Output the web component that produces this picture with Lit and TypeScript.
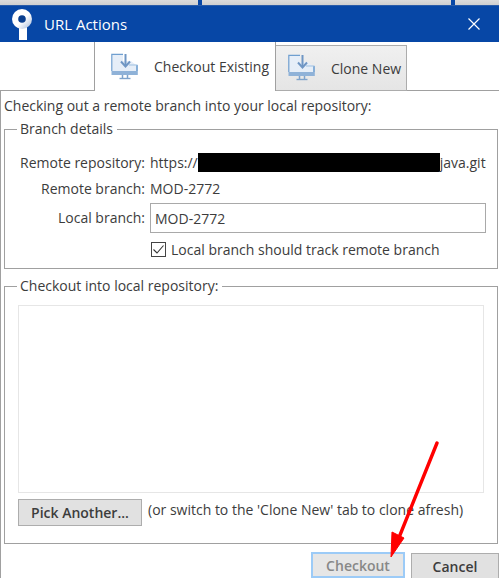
import { LitElement, html, css, svg } from "lit";
import { customElement } from "lit/decorators.js";

const monitor = svg`<svg class="tab-icon" width="30" height="28" viewBox="0 0 30 28" aria-hidden="true">
  <path d="M1 18 V1.5 H12" fill="none" stroke="#6f9fd0" stroke-width="1.6"/>
  <path d="M1.5 2 H12 V8 L20 8 L25 12 H26.5 V18 H1.5 Z" fill="#e6eef8"/>
  <path d="M26 12 V18" stroke="#6f9fd0" stroke-width="1.6" fill="none"/>
  <path d="M18 12 H26.5" stroke="#9dbfe0" stroke-width="1" fill="none"/>
  <path d="M0.5 18 H26.8 V22 H0.5 Z" fill="#8fb2d8"/>
  <path d="M14.5 1 V12" stroke="#6f96c4" stroke-width="2" fill="none"/>
  <path d="M10 8.5 L14.5 13.5 L19 8.5" stroke="#6f96c4" stroke-width="2" fill="none"/>
  <path d="M11.5 22 V25 M16.5 22 V25" stroke="#7ea3cc" stroke-width="1.5" fill="none"/>
  <path d="M8.5 25.5 H19.5" stroke="#7ea3cc" stroke-width="1.4" fill="none"/>
</svg>`;

@customElement("app-root")
export class AppRoot extends LitElement {
  static styles = css`
    :host {
      display: block;
      position: relative;
      width: 499px;
      height: 578px;
      overflow: hidden;
      background: #fff;
      font-family: "Open Sans", "Noto Sans", sans-serif;
      font-size: 14px;
      color: #3c3c3c;
    }
    .backdrop {
      height: 5px;
      display: flex;
      background: linear-gradient(#dcdcdc, #cfcfcf);
    }
    .sliver {
      width: 4px;
      height: 5px;
      background: #0747a6;
    }
    .sliver.a { margin-left: 198px; }
    .sliver.b { margin-left: 249px; }
    .titlebar {
      height: 37px;
      background: #0747a6;
      border-top: 1px solid #2a5ca8;
      box-sizing: border-box;
      display: flex;
      align-items: center;
      color: #fff;
      padding: 0 19px 0 10px;
    }
    .logo { flex: none; }
    .title {
      margin-left: 10px;
      font-size: 15px;
      flex: 1;
    }
    .tabs {
      height: 49px;
      display: flex;
      align-items: flex-end;
      border-bottom: 1px solid #a0a0a0;
      box-sizing: border-box;
      padding-left: 94px;
    }
    .tab {
      box-sizing: border-box;
      display: flex;
      align-items: center;
    }
    .tab.active {
      width: 182px;
      height: 49px;
      margin-bottom: -1px;
      background: #fff;
      border-left: 1px solid #a0a0a0;
      border-right: 1px solid #a0a0a0;
      padding-left: 16px;
      gap: 13px;
    }
    .tab.inactive {
      width: 131px;
      height: 46px;
      margin-bottom: -1px;
      background: linear-gradient(#f0f0f0, #e5e5e5);
      border: 1px solid #acacac;
      border-left: none;
      padding-left: 12px;
      gap: 13px;
    }
    .body {
      border-left: 1px solid #a0a0a0;
      height: 488px;
      box-sizing: border-box;
      padding: 5px 1px 0 3px;
      display: flex;
      flex-direction: column;
    }
    .intro { line-height: 20px; margin-bottom: 3px; }
    fieldset {
      margin: 0;
      border: 1px solid #a0a0a0;
      padding: 0 13px;
      min-width: 0;
    }
    legend {
      padding: 0 4px 0 3px;
      margin-left: -1px;
      line-height: 20px;
    }
    .details { height: 151px; box-sizing: border-box; }
    .form {
      display: grid;
      grid-template-columns: 127px 1fr;
      column-gap: 5px;
      align-items: center;
      padding-top: 10px;
    }
    .label { text-align: right; }
    .row-h { height: 26px; display: flex; align-items: center; }
    .url { white-space: nowrap; display: flex; align-items: center; }
    .redact {
      display: inline-block;
      width: 242px;
      height: 19px;
      background: #000;
    }
    .input {
      box-sizing: border-box;
      height: 30px;
      margin-top: 2px;
      border: 1px solid #a9a9a9;
      padding-left: 4px;
      display: flex;
      align-items: center;
    }
    .check {
      display: flex;
      align-items: center;
      gap: 5px;
      height: 26px;
      margin-top: 3px;
      padding-left: 1px;
    }
    .box { flex: none; }
    .into {
      margin-top: 7px;
      height: 269px;
      box-sizing: border-box;
      display: flex;
      flex-direction: column;
    }
    .list {
      height: 188px;
      box-sizing: border-box;
      border: 1px solid #e6e6e6;
      margin-top: 9px;
    }
    .pick-row {
      display: flex;
      gap: 6px;
      margin-top: 6px;
    }
    .btn {
      box-sizing: border-box;
      background: #e1e1e1;
      border: 1px solid #adadad;
      font-weight: 600;
      display: flex;
      align-items: center;
      justify-content: center;
    }
    .pick { width: 124px; height: 27px; }
    .hint { line-height: 20px; margin-top: 1px; }
    .footer {
      display: flex;
      justify-content: flex-end;
      gap: 6px;
      margin-top: 8px;
      margin-right: -1px;
    }
    .ok {
      width: 94px;
      height: 26px;
      border: 2px solid #9ccbf7;
      color: #888;
      background: #e6e6e6;
    }
    .cancel { width: 88px; height: 26px; margin-top: 1px; }
    .arrow {
      position: absolute;
      left: 0;
      top: 0;
      pointer-events: none;
    }
  `;

  render() {
    return html`
      <div class="backdrop"><span class="sliver a"></span><span class="sliver b"></span></div>
      <div class="titlebar">
        <svg class="logo" width="24" height="34" viewBox="0 0 24 34" aria-hidden="true">
          <defs>
            <linearGradient id="lg" x1="0" y1="0" x2="1" y2="1">
              <stop offset="0.55" stop-color="#fff"/><stop offset="1" stop-color="#9fb6d8"/>
            </linearGradient>
          </defs>
          <rect x="9" y="16" width="8" height="17" fill="#fff"/>
          <circle cx="12" cy="12" r="10" fill="url(#lg)"/>
          <circle cx="12" cy="12" r="3.8" fill="#0a3f8f"/>
        </svg>
        <span class="title">URL Actions</span>
        <svg width="12" height="12" viewBox="0 0 12 12" aria-hidden="true">
          <path d="M0.5 0.5 L11.5 11.5 M11.5 0.5 L0.5 11.5" stroke="#fff" stroke-width="1.2" fill="none"/>
        </svg>
      </div>
      <div class="tabs">
        <div class="tab active">${monitor}<span>Checkout Existing</span></div>
        <div class="tab inactive">${monitor}<span>Clone New</span></div>
      </div>
      <div class="body">
        <div class="intro">Checking out a remote branch into your local repository:</div>
        <fieldset class="details">
          <legend>Branch details</legend>
          <div class="form">
            <div class="label row-h" style="justify-content:flex-end">Remote repository:</div>
            <div class="url row-h">https://<span class="redact"></span>java.git</div>
            <div class="label row-h" style="justify-content:flex-end">Remote branch:</div>
            <div class="row-h">MOD-2772</div>
            <div class="label">Local branch:</div>
            <div class="input">MOD-2772</div>
            <div></div>
            <div class="check">
              <svg class="box" width="15" height="15" viewBox="0 0 15 15" aria-hidden="true">
                <rect x="0.5" y="0.5" width="14" height="14" fill="#fff" stroke="#444"/>
                <path d="M2.5 7.5 L6 11 L12.5 3.5" fill="none" stroke="#333" stroke-width="1.1"/>
              </svg>
              <span>Local branch should track remote branch</span>
            </div>
          </div>
        </fieldset>
        <fieldset class="into">
          <legend>Checkout into local repository:</legend>
          <div class="list"></div>
          <div class="pick-row">
            <div class="btn pick">Pick Another...</div>
            <div class="hint">(or switch to the 'Clone New' tab to clone afresh)</div>
          </div>
        </fieldset>
        <div class="footer">
          <div class="btn ok">Checkout</div>
          <div class="btn cancel">Cancel</div>
        </div>
      </div>
      <svg class="arrow" width="499" height="578" viewBox="0 0 499 578" aria-hidden="true">
        <path d="M437 443 L398 540" stroke="#f00" stroke-width="3.4" stroke-linecap="round" fill="none"/>
        <path d="M391 557 L392 532 L404 538 Z" fill="#f00" stroke="#f00" stroke-linejoin="round"/>
      </svg>
    `;
  }
}
